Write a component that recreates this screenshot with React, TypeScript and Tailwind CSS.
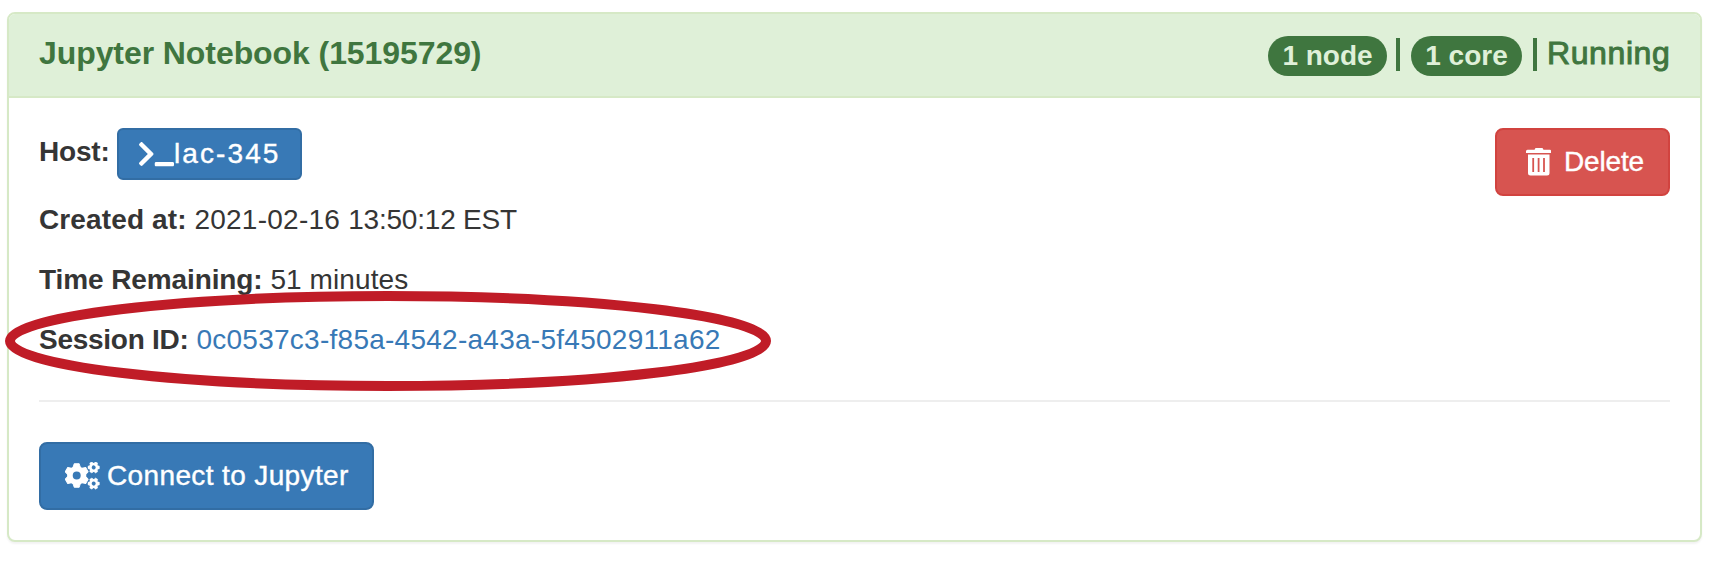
import { FaTerminal } from "react-icons/fa";

function TrashIcon() {
  return (
    <svg viewBox="0 0 26 28" className="h-7 w-[26px] shrink-0" fill="currentColor" aria-hidden="true">
      <path d="M1.5 1.7H8.5L9.5 0H16.5L17.5 1.7H24Q25 1.7 25 2.7V5H0V3.2Q0 1.7 1.5 1.7Z" />
      <path
        fillRule="evenodd"
        d="M2 6.5H23.500V25A2.5 2.5 0 0 1 21 27.500H4.5A2.5 2.5 0 0 1 2 25ZM6.3 10V24H8.1V10ZM11.7 10V24H13.5V10ZM17.1 10V24H18.9V10Z"
      />
    </svg>
  );
}

interface GearProps {
  cx: number;
  cy: number;
  body: number;
  tip: number;
  tooth: number;
  hole: number;
  turn: number;
}

function Gear({ cx, cy, body, tip, tooth, hole, turn }: GearProps) {
  return (
    <g transform={`translate(${cx} ${cy}) rotate(${turn})`}>
      <circle r={(body + hole) / 2} fill="none" stroke="currentColor" strokeWidth={body - hole} />
      {[0, 60, 120, 180, 240, 300].map((angle) => (
        <path
          key={angle}
          transform={`rotate(${angle})`}
          fill="currentColor"
          stroke="currentColor"
          strokeWidth={tooth * 0.15}
          strokeLinejoin="round"
          d={`M${-tooth * 0.58} ${-body * 0.86}L${-tooth * 0.4} ${-tip}H${tooth * 0.4}L${tooth * 0.58} ${-body * 0.86}Z`}
        />
      ))}
    </g>
  );
}

function GearsIcon() {
  return (
    <svg viewBox="0 0 35 28" className="h-7 w-[35px] shrink-0" aria-hidden="true">
      <Gear cx={11.7} cy={13.5} body={9.6} tip={11.8} tooth={6.2} hole={4} turn={0} />
      <Gear cx={28.7} cy={5.4} body={4.5} tip={5.7} tooth={3.1} hole={2} turn={30} />
      <Gear cx={28.7} cy={21.6} body={4.5} tip={5.7} tooth={3.1} hole={2} turn={30} />
    </svg>
  );
}

export default function App() {
  return (
    <div className="h-[561px] w-[1720px] overflow-hidden bg-white pt-3 pl-[7px] font-['Liberation_Sans',Arial,sans-serif] text-[28px] leading-10 text-[#353535]">
      <section className="relative flex h-[530px] w-[1695px] flex-col rounded-lg border-2 border-[#d6e9c6] bg-white shadow-[0_2px_2px_rgba(0,0,0,0.05)]">
        <header className="flex h-[84px] shrink-0 items-start justify-between rounded-t-md border-b-2 border-[#d6e9c6] bg-[#dff0d8] px-[30px] text-[32px] text-[#3f763f]">
          <h3 className="pt-[19px] font-bold tracking-[-0.08px]">Jupyter Notebook (15195729)</h3>
          <div className="flex items-start pt-5">
            <span className="mt-0.5 flex h-10 w-[119px] items-center justify-center rounded-full bg-[#3f763f] text-[28px] font-bold text-[#dff0d8]">1 node</span>
            <span className="mt-1 ml-[9px] h-[33px] w-1 bg-[#3f763f]" />
            <span className="mt-0.5 ml-[11px] flex h-10 w-[111px] items-center justify-center rounded-full bg-[#3f763f] text-[28px] font-bold text-[#dff0d8]">1 core</span>
            <span className="mt-1 ml-[11px] h-[33px] w-1 bg-[#3f763f]" />
            <span className="-mt-px ml-[10px] w-[123px] tracking-[0.6px] [-webkit-text-stroke:1px_#3f763f]">Running</span>
          </div>
        </header>
        <div className="flex flex-1 flex-col px-[30px] pt-[30px]">
          <div className="flex items-start justify-between">
            <div className="flex flex-col">
              <div className="flex h-[52px] items-start">
                <b className="w-[78px] pt-1 tracking-[-0.2px]">Host:</b>
                <button className="flex h-[52px] w-[185px] items-center rounded-md border-2 border-[#326da4] bg-[#3879b6] pl-5 text-white">
                  <FaTerminal className="h-7 w-[35px] shrink-0" />
                  <span className="tracking-[2.1px] [-webkit-text-stroke:0.4px_white]">lac-345</span>
                </button>
              </div>
              <p className="mt-5"><b className="tracking-[0.12px]">Created at:</b> <span className="tracking-[0.25px]">2021-02-16 </span><span className="tracking-[-0.2px]">13:50:12 EST</span></p>
              <p className="mt-5"><b className="tracking-[-0.1px]">Time Remaining:</b> <span className="tracking-[0.1px]">51 minutes</span></p>
              <p className="mt-5"><b className="tracking-[-0.26px]">Session ID:</b> <a className="tracking-[0.26px] text-[#3879b6]">0c0537c3-f85a-4542-a43a-5f4502911a62</a></p>
            </div>
            <button className="flex h-[68px] w-[175px] items-center rounded-lg border-2 border-[#d1433f] bg-[#d75450] pl-[29px] text-white">
              <TrashIcon />
              <span className="ml-3 tracking-[-0.15px] [-webkit-text-stroke:0.4px_white]">Delete</span>
            </button>
          </div>
          <hr className="mt-10 border-t-2 border-[#eeeeee]" />
          <button className="mt-10 flex h-[68px] w-[335px] items-center rounded-lg border-2 border-[#326da4] bg-[#3879b6] pl-6 text-white">
            <GearsIcon />
            <span className="ml-[7px] tracking-[0.37px] [-webkit-text-stroke:0.4px_white]">Connect to Jupyter</span>
          </button>
        </div>
        <svg className="pointer-events-none absolute top-[277px] -left-1 h-[100px] w-[766px]" viewBox="0 0 766 100" fill="none" aria-hidden="true">
          <ellipse cx="383" cy="50" rx="378" ry="45" stroke="#c01c27" strokeWidth="10" />
        </svg>
      </section>
    </div>
  );
}
